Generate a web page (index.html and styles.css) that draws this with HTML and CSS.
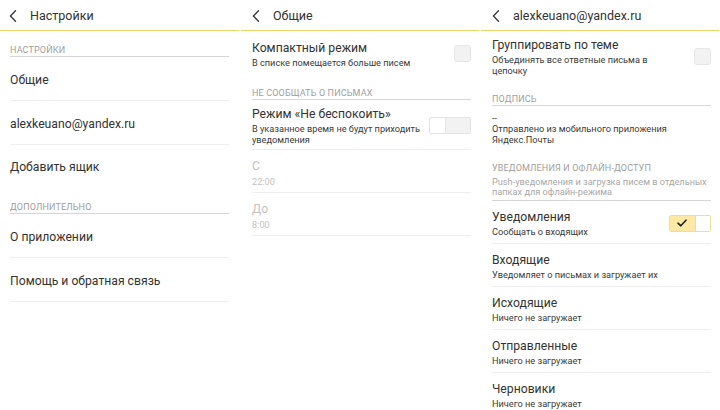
FILE: index.html
```html
<!DOCTYPE html>
<html lang="ru">
<head>
<meta charset="utf-8">
<title>Настройки</title>
<link rel="stylesheet" href="styles.css">
</head>
<body>
<div class="screens">

  <section class="panel panel-first">
    <header class="bar">
      <svg class="back" viewBox="0 0 8 12" width="8" height="12"><path d="M6.5 0.8 L1.4 6 L6.5 11.2" /></svg>
      <h1 class="bar-title">Настройки</h1>
    </header>
    <div class="content">
      <div class="group group-top"><div class="group-title">Настройки</div></div>
      <div class="row row-tall"><div class="row-text"><div class="row-title">Общие</div></div></div>
      <div class="row row-tall"><div class="row-text"><div class="row-title">alexkeuano@yandex.ru</div></div></div>
      <div class="row row-tall row-last row-end"><div class="row-text"><div class="row-title">Добавить ящик</div></div></div>
      <div class="group group-tight"><div class="group-title">Дополнительно</div></div>
      <div class="row row-tall"><div class="row-text"><div class="row-title">О приложении</div></div></div>
      <div class="row row-tall"><div class="row-text"><div class="row-title">Помощь и обратная связь</div></div></div>
    </div>
  </section>

  <section class="panel">
    <header class="bar">
      <svg class="back" viewBox="0 0 8 12" width="8" height="12"><path d="M6.5 0.8 L1.4 6 L6.5 11.2" /></svg>
      <h1 class="bar-title">Общие</h1>
    </header>
    <div class="content">
      <div class="row row-last">
        <div class="row-text">
          <div class="row-title">Компактный режим</div>
          <div class="row-sub">В списке помещается больше писем</div>
        </div>
        <span class="checkbox"></span>
      </div>
      <div class="group"><div class="group-title">Не сообщать о письмах</div></div>
      <div class="row">
        <div class="row-text">
          <div class="row-title">Режим «Не беспокоить»</div>
          <div class="row-sub">В указанное время не будут приходить<br>уведомления</div>
        </div>
        <span class="toggle"><span class="toggle-knob"></span><span class="toggle-track"></span></span>
      </div>
      <div class="row row-disabled">
        <div class="row-text">
          <div class="row-title">С</div>
          <div class="row-sub">22:00</div>
        </div>
      </div>
      <div class="row row-disabled">
        <div class="row-text">
          <div class="row-title">До</div>
          <div class="row-sub">8:00</div>
        </div>
      </div>
    </div>
  </section>

  <section class="panel">
    <header class="bar">
      <svg class="back" viewBox="0 0 8 12" width="8" height="12"><path d="M6.5 0.8 L1.4 6 L6.5 11.2" /></svg>
      <h1 class="bar-title">alexkeuano@yandex.ru</h1>
    </header>
    <div class="content">
      <div class="row row-last">
        <div class="row-text">
          <div class="row-title">Группировать по теме</div>
          <div class="row-sub">Объединять все ответные письма в<br>цепочку</div>
        </div>
        <span class="checkbox"></span>
      </div>
      <div class="group"><div class="group-title">Подпись</div></div>
      <div class="signature">--<br>Отправлено из мобильного приложения<br>Яндекс.Почты</div>
      <div class="group">
        <div class="group-title">Уведомления и офлайн-доступ</div>
        <div class="group-desc">Push-уведомления и загрузка писем в отдельных<br>папках для офлайн-режима</div>
      </div>
      <div class="row">
        <div class="row-text">
          <div class="row-title">Уведомления</div>
          <div class="row-sub">Сообщать о входящих</div>
        </div>
        <span class="toggle toggle-on">
          <span class="toggle-fill"><svg class="check" viewBox="0 0 10 8" width="10" height="8"><path d="M1 4.2 L3.8 6.8 L9 1.2" /></svg></span>
          <span class="toggle-knob"></span>
        </span>
      </div>
      <div class="row">
        <div class="row-text">
          <div class="row-title">Входящие</div>
          <div class="row-sub">Уведомляет о письмах и загружает их</div>
        </div>
      </div>
      <div class="row">
        <div class="row-text">
          <div class="row-title">Исходящие</div>
          <div class="row-sub">Ничего не загружает</div>
        </div>
      </div>
      <div class="row">
        <div class="row-text">
          <div class="row-title">Отправленные</div>
          <div class="row-sub">Ничего не загружает</div>
        </div>
      </div>
      <div class="row">
        <div class="row-text">
          <div class="row-title">Черновики</div>
          <div class="row-sub">Ничего не загружает</div>
        </div>
      </div>
    </div>
  </section>

</div>
</body>
</html>
```

FILE: styles.css
```css
* { box-sizing: border-box; }

html, body {
  margin: 0;
  padding: 0;
  background: #ffffff;
}

body {
  font-family: Roboto, "Noto Sans", "Liberation Sans", sans-serif;
  color: #333333;
  width: 720px;
  height: 410px;
  overflow: hidden;
}

.screens {
  display: flex;
  width: 720px;
  height: 410px;
}

.panel {
  width: 240px;
  flex: 0 0 240px;
  display: flex;
  flex-direction: column;
  overflow: hidden;
}

.bar {
  height: 31px;
  flex: 0 0 31px;
  margin: 0 1px;
  border-bottom: 1px solid #f1d36c;
  display: flex;
  align-items: center;
  padding: 0 0 0 11px;
  gap: 13px;
}

.panel-first .bar {
  margin-left: 0;
  padding-left: 9px;
}

.back {
  display: block;
  flex: 0 0 auto;
  margin-top: 2px;
}

.back path {
  fill: none;
  stroke: #3a3a3a;
  stroke-width: 1.4;
  stroke-linecap: round;
  stroke-linejoin: round;
}

.bar-title {
  margin: 0;
  font-size: 12.5px;
  font-weight: 400;
  color: #333333;
  line-height: 16px;
  padding-top: 2px;
}

.content {
  padding: 0 9px 0 12px;
  display: flex;
  flex-direction: column;
}

.panel-first .content {
  padding: 0 11px 0 10px;
}

.group {
  padding-top: 14px;
  padding-bottom: 0;
  border-bottom: 1px solid #d6d6d6;
}

.group-tight {
  padding-top: 13px;
}

.group-title {
  font-size: 9px;
  line-height: 11px;
  text-transform: uppercase;
  color: #9e9e9e;
  letter-spacing: 0.15px;
}

.group-desc {
  font-size: 9.2px;
  line-height: 10px;
  color: #a8a8a8;
  margin-top: 3px;
  padding-bottom: 3px;
  white-space: nowrap;
}

.row {
  min-height: 43px;
  display: flex;
  align-items: center;
  padding: 6px 0 4px;
  border-bottom: 1px solid #eeeeee;
}

.row-tall {
  min-height: 44px;
  padding: 7px 0 4px;
}

.row-last {
  border-bottom: none;
}

.row-end {
  min-height: 44px;
  padding: 5px 0 6px;
}

.row-text {
  flex: 1 1 auto;
  min-width: 0;
}

.row-title {
  font-size: 12.2px;
  line-height: 16px;
  color: #333333;
  white-space: nowrap;
}

.row-sub {
  font-size: 9.2px;
  line-height: 11px;
  color: #3a3a3a;
  margin-top: 1px;
  white-space: nowrap;
}

.row-disabled .row-title,
.row-disabled .row-sub {
  color: #c2c2c2;
}

.row-disabled .row-sub {
  margin-top: 2px;
}

.signature {
  font-size: 9.2px;
  line-height: 11px;
  color: #3a3a3a;
  padding: 6px 0 4px;
}

.checkbox {
  flex: 0 0 auto;
  width: 17px;
  height: 17px;
  border-radius: 3px;
  background: #f2f2f2;
  border: 1px solid #e6e6e6;
}

.toggle {
  flex: 0 0 auto;
  display: flex;
  width: 42px;
  height: 17px;
  border: 1px solid #e4e4e4;
  border-radius: 2px;
  overflow: hidden;
  background: #f2f2f2;
}

.toggle-knob {
  width: 16px;
  height: 100%;
  background: #ffffff;
  border-right: 1px solid #e4e4e4;
}

.toggle-track {
  flex: 1 1 auto;
  background: #f2f2f2;
}

.toggle-on {
  border-color: #eedc9a;
  background: #ffffff;
}

.toggle-on .toggle-knob {
  border-right: none;
  border-left: 1px solid #eedc9a;
  flex: 1 1 auto;
}

.toggle-fill {
  width: 26px;
  height: 100%;
  background: #fde9a3;
  display: flex;
  align-items: center;
  justify-content: center;
}

.check {
  display: block;
}

.check path {
  fill: none;
  stroke: #222222;
  stroke-width: 1.6;
  stroke-linecap: round;
  stroke-linejoin: round;
}
```
